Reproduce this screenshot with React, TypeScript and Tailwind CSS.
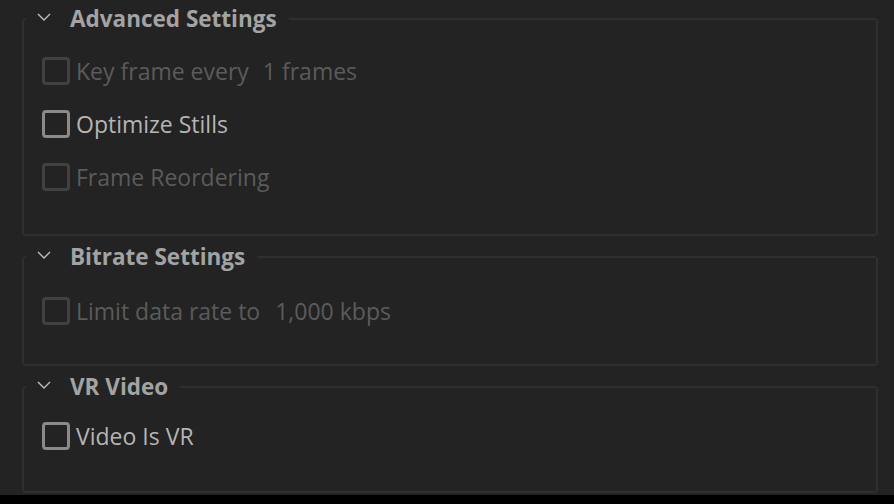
import React from "react";

const Chevron = () => (
  <svg width="14" height="8" viewBox="0 0 14 8" className="shrink-0 -mt-[5px]">
    <path d="M1 1 L7 7 L13 1" fill="none" stroke="#bdbdbd" strokeWidth="1.4" />
  </svg>
);

const Check = ({ enabled }: { enabled: boolean }) => (
  <div
    className={
      enabled
        ? "w-[28px] h-[28px] rounded-[4px] border-[3px] border-[#8a8a8a] shrink-0"
        : "w-[28px] h-[28px] rounded-[4px] border-[3px] border-[#414141] shrink-0"
    }
  />
);

const Row = ({ enabled, children }: { enabled: boolean; children: React.ReactNode }) => (
  <div
    className={
      enabled
        ? "h-[53px] flex items-center pl-[18px] text-[#b5b5b5]"
        : "h-[53px] flex items-center pl-[18px] text-[#5b5b5b]"
    }
  >
    <Check enabled={enabled} />
    <span className="ml-[6px] whitespace-pre leading-[30px]">{children}</span>
  </div>
);

const Section = ({
  title,
  className,
  children,
}: {
  title: string;
  className: string;
  children: React.ReactNode;
}) => (
  <fieldset className={"border-2 border-[#2f2f2f] rounded-[4px] " + className}>
    <legend className="ml-[2px] pl-[11px] pr-[12px] h-[28px] flex items-center">
      <Chevron />
      <span className="ml-[19px] font-bold text-[#a3a3a3] text-[22.5px] leading-[28px]">{title}</span>
    </legend>
    {children}
  </fieldset>
);

export default function App() {
  return (
    <div
      className="w-[894px] h-[504px] bg-black flex flex-col"
      style={{ fontFamily: '"Open Sans", "Noto Sans", sans-serif' }}
    >
      <div className="h-[495px] bg-[#232323] pl-[22px] pr-[16px] pt-[5px] text-[23px]">
        <Section title="Advanced Settings" className="pt-[11px] pb-[31px]">
          <Row enabled={false}>
            Key frame every<span className="ml-[14px]">1 frames</span>
          </Row>
          <Row enabled={true}>Optimize Stills</Row>
          <Row enabled={false}>Frame Reordering</Row>
        </Section>
        <Section title="Bitrate Settings" className="mt-[7px] pt-[13px] pb-[27px]">
          <Row enabled={false}>
            Limit data rate to<span className="ml-[15px]">1,000 kbps</span>
          </Row>
        </Section>
        <Section title="VR Video" className="mt-[7px] pt-[8px] pb-[29px]">
          <Row enabled={true}>Video Is VR</Row>
        </Section>
      </div>
    </div>
  );
}
